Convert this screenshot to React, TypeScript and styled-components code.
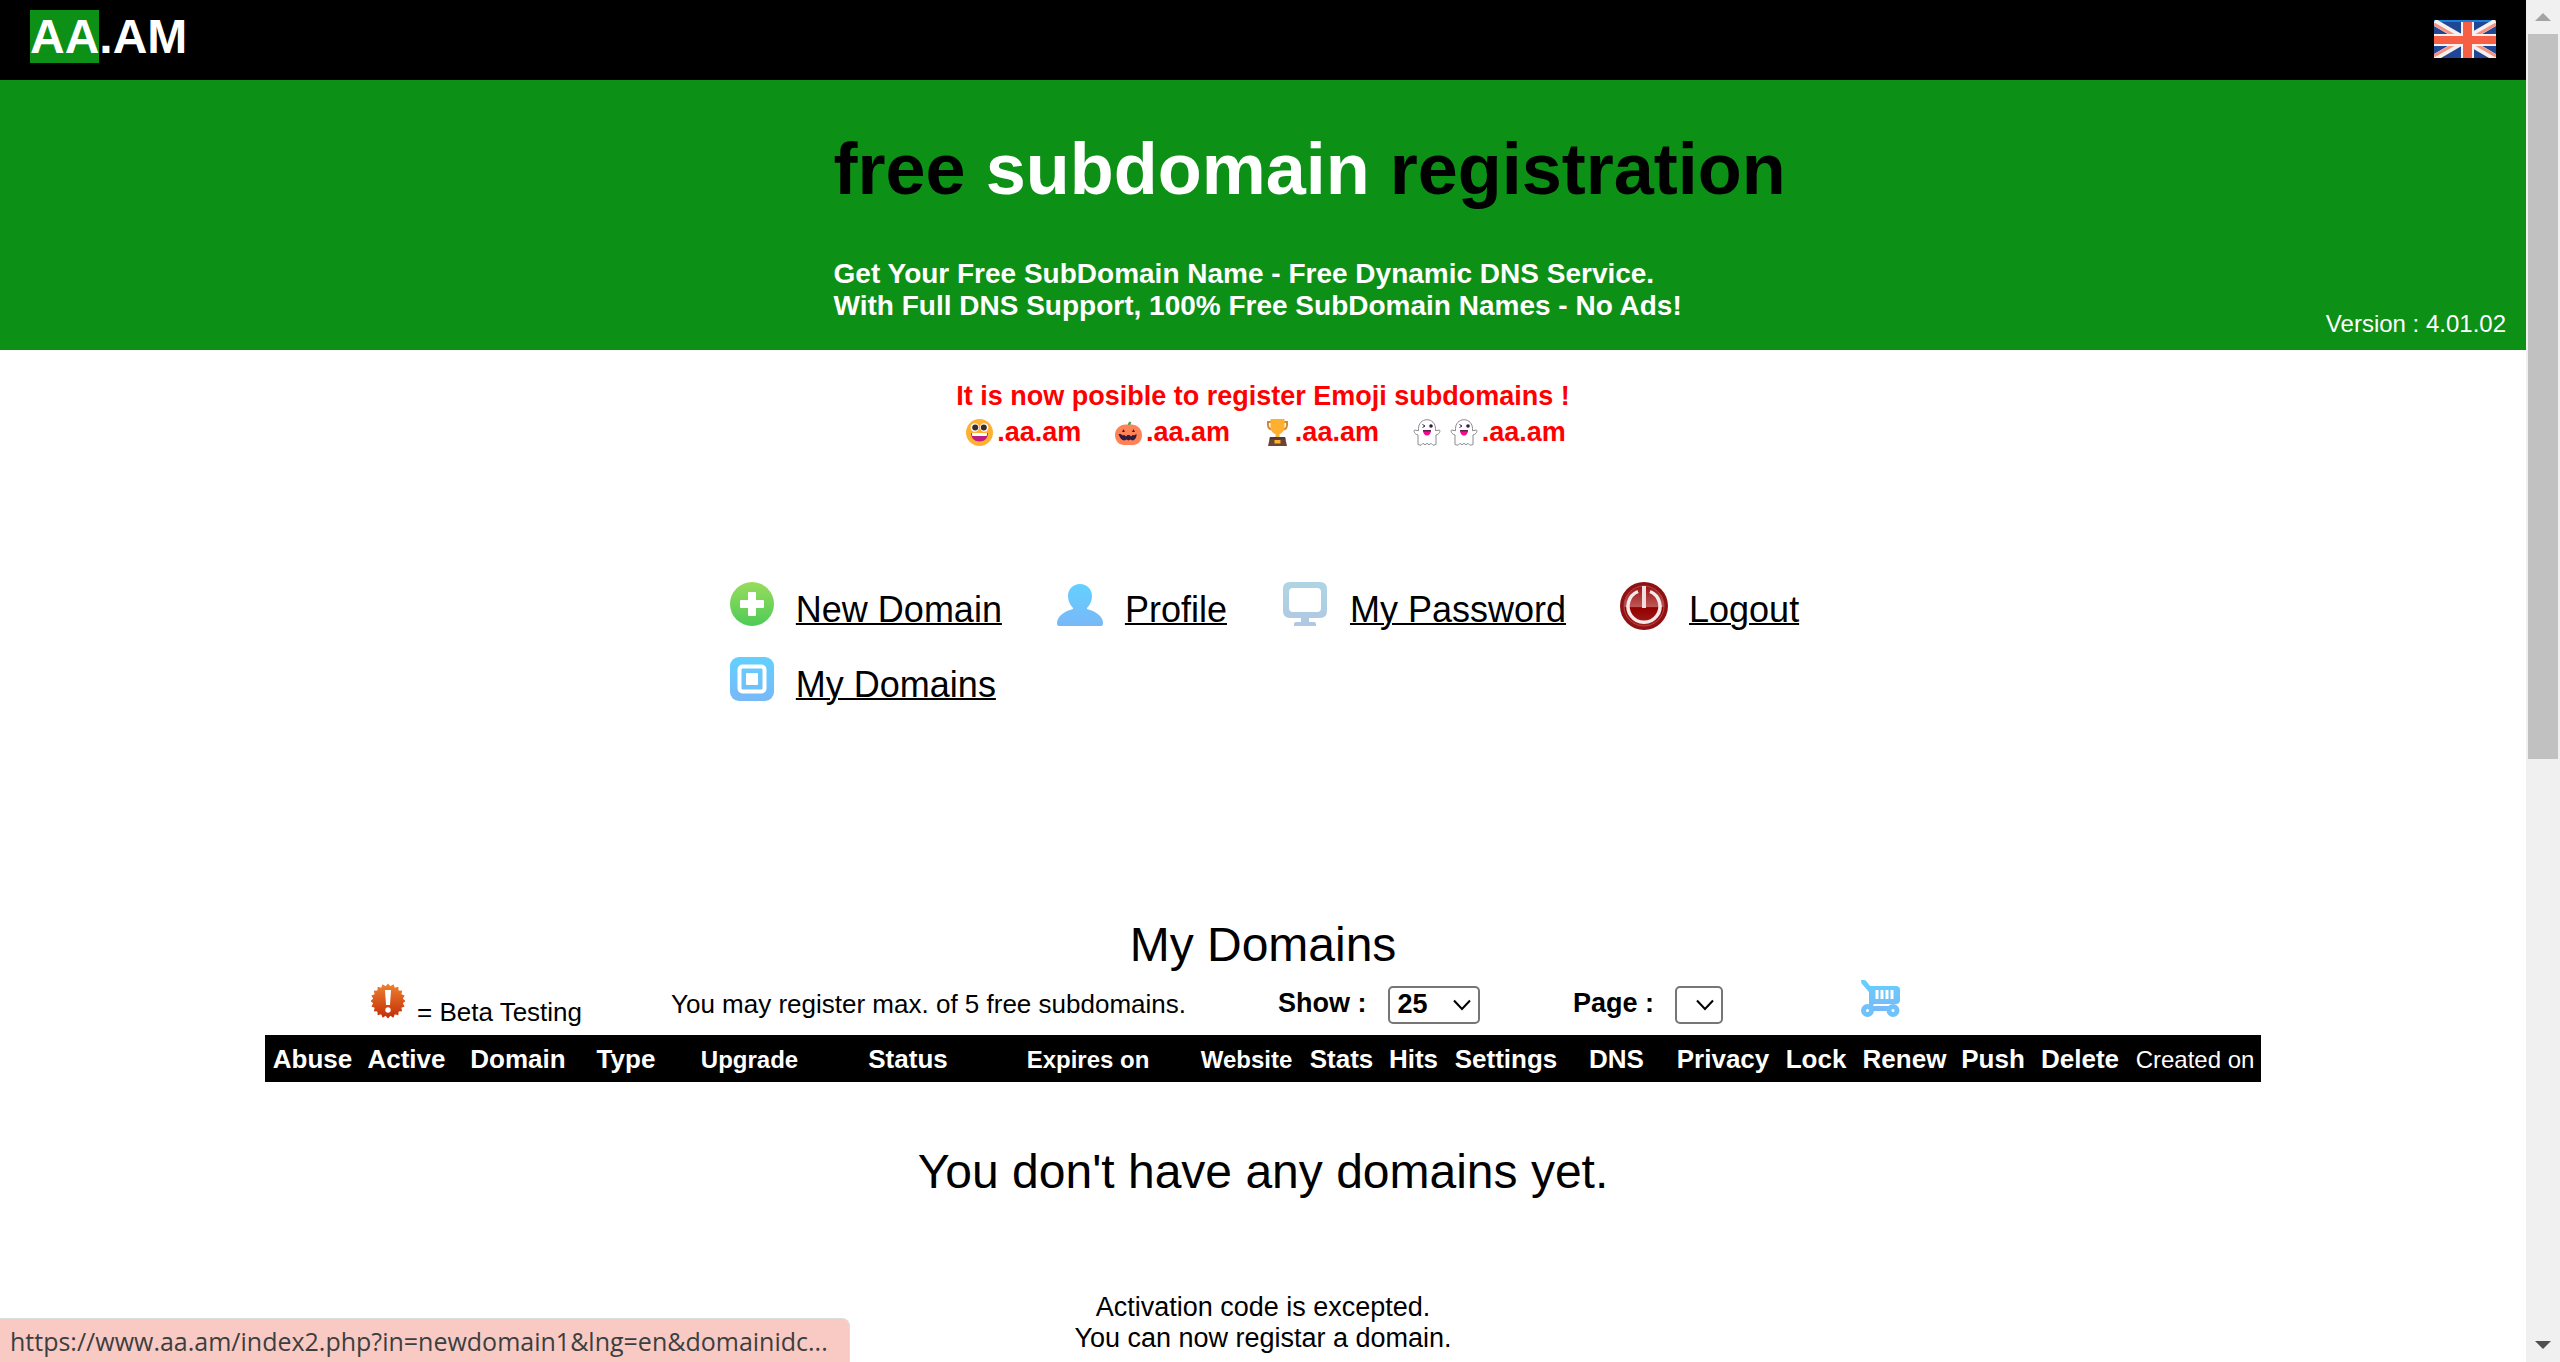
import React from 'react';
import styled, { createGlobalStyle } from 'styled-components';

const GlobalStyle = createGlobalStyle`
  * { box-sizing: border-box; }
  body {
    margin: 0;
    background: #ffffff;
    color: #000000;
    font-family: Arial, "Liberation Sans", sans-serif;
  }
`;

/* ---------- shell ---------- */

const Shell = styled.div`
  display: grid;
  grid-template-columns: minmax(0, 1fr) 34px;
  height: 100vh;
  overflow: hidden;
`;

const Content = styled.div`
  display: flex;
  flex-direction: column;
  overflow: hidden;
`;

const ScrollTrack = styled.div`
  display: grid;
  grid-template-rows: 34px 1fr 34px;
  justify-items: center;
  align-items: center;
  padding: 0 2px;
  background: #f0f0f0;
  overflow: hidden;
`;

const ScrollLane = styled.div`
  width: 100%;
  height: 100%;
`;

const ScrollThumb = styled.div`
  width: 100%;
  height: 56%;
  background: #c1c1c1;
`;

const StatusBubble = styled.div`
  position: fixed;
  left: 0;
  bottom: 0;
  height: 44px;
  width: 850px;
  padding: 0 10px;
  border-top: 1px solid #dddddd;
  border-right: 1px solid #dddddd;
  border-radius: 0 8px 0 0;
  background: #f9cac4;
  color: #3c3f40;
  font-family: "Segoe UI", "Open Sans", sans-serif;
  font-size: 25px;
  line-height: 44px;
  white-space: nowrap;
`;

/* ---------- header ---------- */

const TopBar = styled.header`
  display: flex;
  align-items: center;
  justify-content: space-between;
  height: 80px;
  flex: none;
  padding: 0 30px 4px;
  background: #000000;
`;

const Logo = styled.a`
  padding-bottom: 4px;
  color: #ffffff;
  font-size: 48px;
  font-weight: bold;
  text-decoration: none;
`;

const LogoMark = styled.span`
  background: #0d9016;
`;

const FlagButton = styled.button`
  display: block;
  padding: 2px 0 0;
  border: 0;
  background: none;
  line-height: 0;
`;

const Hero = styled.section`
  display: flex;
  justify-content: space-between;
  flex: none;
  padding: 48px 20px 12px 33%;
  background: #0d9016;
`;

const HeroCopy = styled.div`
  padding-bottom: 16px;
  white-space: nowrap;
`;

const HeroTitle = styled.h1`
  margin: 0 0 48px;
  font-size: 72px;
  line-height: 82px;
`;

const Highlight = styled.span`
  color: #ffffff;
`;

const HeroText = styled.p`
  margin: 0;
  color: #ffffff;
  font-size: 28px;
  font-weight: bold;
  line-height: 32px;
`;

const Version = styled.span`
  align-self: flex-end;
  color: #ffffff;
  font-size: 24px;
  line-height: 28px;
`;

/* ---------- emoji notice ---------- */

const Notice = styled.section`
  align-self: center;
  margin-top: 28px;
  color: #ff0000;
  font-size: 27px;
  font-weight: bold;
  line-height: 36px;
`;

const NoticeText = styled.p`
  margin: 0;
`;

const EmojiList = styled.div`
  display: flex;
  justify-content: space-between;
  padding: 0 4px 0 10px;
`;

const EmojiDomain = styled.span`
  display: flex;
  align-items: center;
  gap: 4px;
`;

const EmojiGroup = styled.span`
  display: flex;
  gap: 9px;
`;

/* ---------- menu ---------- */

const Menu = styled.nav`
  display: flex;
  flex-direction: column;
  gap: 27px;
  align-self: center;
  margin-top: 132px;
`;

const MenuRow = styled.div`
  display: flex;
  gap: 54px;
`;

const MenuLink = styled.a`
  display: flex;
  align-items: flex-end;
  gap: 21px;
  height: 48px;
  color: #000000;
  font-size: 36px;
  line-height: 41px;
  text-decoration-thickness: 2px;
`;

/* ---------- domain list ---------- */

const Title = styled.h2`
  margin: ${(p: { $top: number }) => p.$top}px 0 0;
  font-size: 48px;
  font-weight: normal;
  line-height: 55px;
  text-align: center;
`;

const ListArea = styled.section`
  align-self: center;
`;

const Toolbar = styled.div`
  display: grid;
  grid-template-columns: 300px 607px 295px 288px auto;
  align-items: center;
  height: 48px;
  margin: 8px 0 7px;
  padding-left: 106px;
`;

const Legend = styled.span`
  display: flex;
  align-items: flex-start;
  gap: 12px;
  font-size: 26px;
  line-height: 30px;
`;

const LegendText = styled.span`
  padding-top: 14px;
`;

const Limit = styled.span`
  padding-bottom: 2px;
  font-size: 26px;
  line-height: 30px;
`;

const Field = styled.label`
  display: flex;
  align-items: center;
  gap: 21px;
  font-size: 27px;
  font-weight: bold;
  line-height: 31px;
`;

const FieldName = styled.span`
  padding-bottom: 2px;
`;

const SelectBox = styled.span`
  display: grid;
  align-items: center;
  width: ${(p: { $width: number }) => p.$width}px;

  > * {
    grid-area: 1 / 1;
  }

  > svg {
    justify-self: end;
    margin-right: 9px;
    pointer-events: none;
  }
`;

const Select = styled.select`
  appearance: none;
  width: 100%;
  height: 38px;
  padding: 0 8px;
  border: 2px solid #767676;
  border-radius: 5px;
  background: #ffffff;
  color: #000000;
  font: bold 27px/31px Arial, "Liberation Sans", sans-serif;
`;

const CartButton = styled.button`
  justify-self: start;
  padding: 0 0 12px;
  border: 0;
  background: none;
  line-height: 0;
`;

const DomainTable = styled.table`
  table-layout: fixed;
  width: 1996px;
  border-collapse: collapse;
  background: #000000;
  color: #ffffff;
`;

const Th = styled.th`
  height: 47px;
  padding: 9px 0 0;
  font-size: ${(p: { $small?: boolean; $light?: boolean }) => (p.$small ? 24 : 26)}px;
  font-weight: ${(p: { $small?: boolean; $light?: boolean }) => (p.$light ? 'normal' : 'bold')};
  line-height: 30px;
  vertical-align: baseline;
  white-space: nowrap;
`;

const Message = styled.p`
  margin: 93px 0 0;
  font-size: 27px;
  line-height: 31px;
  text-align: center;
`;

/* ---------- drawings ---------- */

const Flag = () => (
  <svg width="62" height="38" viewBox="0 0 62 38" role="img" aria-label="English">
    <rect width="62" height="38" fill="#1f4795" />
    <rect width="62" height="2" fill="#1680d8" />
    <path d="M0 2 62 38M62 2 0 38" stroke="#f6efee" strokeWidth="7" />
    <path d="M0 4 28 20M34 20 62 36M62 4 34 20M28 20 0 36" stroke="#f5917e" strokeWidth="3" />
    <path d="M27 2h13v36H27zM0 14h62v12H0z" fill="#f8f0ee" />
    <path d="M29 2h9v36h-9zM0 16h62v8H0z" fill="#f65f44" />
  </svg>
);

const Smiley = () => (
  <svg width="27" height="27" viewBox="0 0 27 27">
    <circle cx="13.500" cy="13.500" r="13.500" fill="#ffb02e" />
    <circle cx="8.800" cy="8.500" r="4.200" fill="#fff" />
    <circle cx="18.200" cy="8.500" r="4.200" fill="#fff" />
    <circle cx="9.200" cy="8.500" r="3" fill="#402a32" />
    <circle cx="17.800" cy="8.500" r="3" fill="#402a32" />
    <path d="M5 14h17c0 5-3.500 8.500-8.500 8.500S5 19 5 14z" fill="#bb1d80" />
    <path d="M6 14h15v2q0 1-1 1H7q-1 0-1-1z" fill="#fff" />
  </svg>
);

const Pumpkin = () => (
  <svg width="27" height="27" viewBox="0 0 27 27">
    <path d="M11.500 7c2-1 1-3 3-4.500l2 1c-1 1-1 2-1 4z" fill="#44a54a" />
    <path d="M13.500 6C20 4 27 9 27 16c0 6-4 10-9 10H9c-5 0-9-4-9-10C0 9 7 4 13.500 6z" fill="#ff8257" />
    <path d="M5.500 15c2 1.500 3 1.500 4 1l1.500 1.500 1.500-1.500h2l1.500 1.500 1.500-1.500c1 .5 2 .5 4-1 .5 3-2 6.500-4 6.500l-2-1-2 1-2-1-2 1c-3 0-5-3.500-6-6.500z" fill="#321b41" />
    <path d="M7 13l1.500-3 1.500 3zM17 13l1.500-3 1.500 3z" fill="#321b41" />
  </svg>
);

const Trophy = () => (
  <svg width="27" height="27" viewBox="0 0 27 27">
    <path d="M7 3H4v3c0 3 2 4.500 5 4.500M20 3h3v3c0 3-2 4.500-5 4.500" fill="none" stroke="#d3883e" strokeWidth="2" />
    <path d="M6.500 0h14v8c0 4-2.500 6.500-5 7v4h-4v-4c-2.500-.5-5-3-5-7z" fill="#ffb02e" />
    <path d="M6 18h15l2 9H4z" fill="#6d4534" />
    <path d="M6 18h15l.5 2.500h-16z" fill="#523a34" />
    <path d="M10.500 21h6v3.500h-6z" fill="#ffb02e" />
  </svg>
);

const Ghost = () => (
  <svg width="28" height="27" viewBox="0 0 28 27">
    <path
      d="M14 .7c5 0 8.500 4 8.500 9v2l4-.7c1 1.500 0 4-3.500 5v9.500l-3 .8-2-2-2 1.500-2-1.500-2 1.500-2-1.500-2 2-3-.8V16C1.500 15 .5 12.500 1.500 11l4 .7v-2c0-5 3.500-9 8.500-9z"
      fill="#fff"
      stroke="#8b8b92"
    />
    <path d="M9.500 5.500l2.500 1.500-2.500 1.500" fill="none" stroke="#321b41" />
    <circle cx="18" cy="7" r="1.800" fill="#321b41" />
    <path d="M10 11h8c0 3.500-1.500 5.500-4 5.500S10 14.500 10 11z" fill="#f70a8d" />
    <path d="M10 11h8v1.500h-8z" fill="#62204f" />
  </svg>
);

const AddIcon = () => (
  <svg width="48" height="48" viewBox="0 0 48 48">
    <defs>
      <linearGradient id="addFill" x1="0" y1="0" x2="0" y2="1">
        <stop offset="0" stopColor="#98dc5c" />
        <stop offset="1" stopColor="#4ecb58" />
      </linearGradient>
    </defs>
    <circle cx="25" cy="22" r="22" fill="url(#addFill)" />
    <path d="M21 11q0-1 1-1h6q1 0 1 1v7h7q1 0 1 1v6q0 1-1 1h-7v7q0 1-1 1h-6q-1 0-1-1v-7h-7q-1 0-1-1v-6q0-1 1-1h7z" fill="#fff" />
  </svg>
);

const BlueFill = ({ id }: { id: string }) => (
  <defs>
    <linearGradient id={id} x1="0" y1="0" x2="0" y2="1">
      <stop offset="0" stopColor="#63d0ff" />
      <stop offset="1" stopColor="#79b8f8" />
    </linearGradient>
  </defs>
);

const UserIcon = () => (
  <svg width="48" height="48" viewBox="0 0 48 48">
    <BlueFill id="userFill" />
    <path
      d="M24 2c7 0 12 5 12 12 0 5-2 9-5 12v1c8 2 16 7 16 14v1q0 2-2 2H3q-2 0-2-2v-1c0-7 8-12 16-14v-1c-3-3-5-7-5-12C12 7 17 2 24 2z"
      fill="url(#userFill)"
    />
  </svg>
);

const MonitorIcon = () => (
  <svg width="48" height="48" viewBox="0 0 48 48">
    <defs>
      <linearGradient id="monitorFill" x1="0" y1="0" x2="0" y2="1">
        <stop offset="0" stopColor="#aed5e4" />
        <stop offset="1" stopColor="#b0c8e2" />
      </linearGradient>
    </defs>
    <path
      fillRule="evenodd"
      d="M9 0h30q7 0 7 7v22q0 7-7 7H28v4h5q2 0 2 2v2H13v-2q0-2 2-2h5v-4H9q-7 0-7-7V7q0-7 7-7zM12 6q-4 0-4 4v16q0 4 4 4h24q4 0 4-4V10q0-4-4-4z"
      fill="url(#monitorFill)"
    />
  </svg>
);

const PowerIcon = () => (
  <svg width="48" height="48" viewBox="0 0 48 48">
    <defs>
      <linearGradient id="powerFill" x1="0" y1="0" x2="0" y2="1">
        <stop offset="0" stopColor="#9a1214" />
        <stop offset="0.520" stopColor="#bf5756" />
        <stop offset="0.540" stopColor="#920000" />
        <stop offset="1" stopColor="#a32020" />
      </linearGradient>
    </defs>
    <circle cx="24" cy="24" r="24" fill="#8f1113" />
    <circle cx="24" cy="24" r="20" fill="url(#powerFill)" stroke="#b04848" strokeWidth="1" />
    <path d="M18 9.500a16 16 0 1 0 12 0" fill="none" stroke="#f6e9e9" strokeWidth="3.500" />
    <path d="M24 4v22" stroke="#f1dddd" strokeWidth="4" />
  </svg>
);

const DomainsIcon = () => (
  <svg width="48" height="48" viewBox="0 0 48 48">
    <BlueFill id="domainsFill" />
    <rect x="3" y="0" width="44" height="44" rx="9" fill="url(#domainsFill)" />
    <rect x="12.500" y="9.500" width="25" height="25" rx="3" fill="none" stroke="#fff" strokeWidth="4" />
    <rect x="19" y="16" width="12" height="12" rx="1" fill="#fff" />
  </svg>
);

const BetaIcon = () => {
  const points = Array.from({ length: 40 }, (_, i) => {
    const radius = i % 2 ? 15 : 17.5;
    const angle = (i * Math.PI) / 20;
    return `${17 + radius * Math.sin(angle)},${18 - radius * Math.cos(angle)}`;
  }).join(' ');
  return (
    <svg width="34" height="36" viewBox="0 0 34 36">
      <defs>
        <linearGradient id="betaFill" x1="0" y1="0" x2="0" y2="1">
          <stop offset="0" stopColor="#ee8330" />
          <stop offset="1" stopColor="#c22c08" />
        </linearGradient>
      </defs>
      <polygon points={points} fill="url(#betaFill)" />
      <path d="M14 7h6l-1 15h-4z" fill="#fff" />
      <circle cx="17" cy="27" r="2.700" fill="#fff" />
    </svg>
  );
};

const CartIcon = () => (
  <svg width="39" height="37" viewBox="0 0 39 37">
    <BlueFill id="cartFill" />
    <path d="M0 0h3q2 0 3 2l3 4h26q4 0 4 4v10q0 4-4 4H13l-1 2h20v5H8V12L1 4Q0 3 0 0z" fill="url(#cartFill)" />
    <path d="M16 10v9M21 10v9M26 10v9M31 10v9" stroke="#fff" strokeWidth="3" />
    <circle cx="6.500" cy="30.500" r="4" fill="#fff" stroke="#70c2fd" strokeWidth="5" />
    <circle cx="32" cy="30.500" r="4" fill="#fff" stroke="#70c2fd" strokeWidth="5" />
  </svg>
);

const Chevron = () => (
  <svg width="18" height="12" viewBox="0 0 18 12">
    <path d="M1 1.500l8 8.500 8-8.500" fill="none" stroke="#000" strokeWidth="2" />
  </svg>
);

const ScrollArrow = ({ up }: { up?: boolean }) => (
  <svg width="16" height="8" viewBox="0 0 16 8">
    <path d={up ? 'M0 8 8 0l8 8z' : 'M0 0h16L8 8z'} fill={up ? '#a3a3a3' : '#505050'} />
  </svg>
);

/* ---------- data ---------- */

const emojiDomains = [[Smiley], [Pumpkin], [Trophy], [Ghost, Ghost]];

const menuRows = [
  [
    { label: 'New Domain', Icon: AddIcon },
    { label: 'Profile', Icon: UserIcon },
    { label: 'My Password', Icon: MonitorIcon },
    { label: 'Logout', Icon: PowerIcon },
  ],
  [{ label: 'My Domains', Icon: DomainsIcon }],
];

const columns: { label: string; width: number; small?: boolean; light?: boolean }[] = [
  { label: 'Abuse', width: 95 },
  { label: 'Active', width: 93 },
  { label: 'Domain', width: 130 },
  { label: 'Type', width: 86 },
  { label: 'Upgrade', width: 161, small: true },
  { label: 'Status', width: 156 },
  { label: 'Expires on', width: 204, small: true },
  { label: 'Website', width: 113, small: true },
  { label: 'Stats', width: 77 },
  { label: 'Hits', width: 67 },
  { label: 'Settings', width: 118 },
  { label: 'DNS', width: 103 },
  { label: 'Privacy', width: 110 },
  { label: 'Lock', width: 76 },
  { label: 'Renew', width: 101 },
  { label: 'Push', width: 76 },
  { label: 'Delete', width: 98 },
  { label: 'Created on', width: 132, small: true, light: true },
];

export default function App() {
  return (
    <>
      <GlobalStyle />
      <Shell>
        <Content>
          <TopBar>
            <Logo href="#">
              <LogoMark>AA</LogoMark>.AM
            </Logo>
            <FlagButton type="button">
              <Flag />
            </FlagButton>
          </TopBar>

          <Hero>
            <HeroCopy>
              <HeroTitle>
                free <Highlight>subdomain</Highlight> registration
              </HeroTitle>
              <HeroText>
                Get Your Free SubDomain Name - Free Dynamic DNS Service.
                <br />
                With Full DNS Support, 100% Free SubDomain Names - No Ads!
              </HeroText>
            </HeroCopy>
            <Version>Version : 4.01.02</Version>
          </Hero>

          <Notice>
            <NoticeText>It is now posible to register Emoji subdomains !</NoticeText>
            <EmojiList>
              {emojiDomains.map((icons, i) => (
                <EmojiDomain key={i}>
                  <EmojiGroup>
                    {icons.map((Icon, j) => (
                      <Icon key={j} />
                    ))}
                  </EmojiGroup>
                  .aa.am
                </EmojiDomain>
              ))}
            </EmojiList>
          </Notice>

          <Menu>
            {menuRows.map((row, i) => (
              <MenuRow key={i}>
                {row.map(({ label, Icon }) => (
                  <MenuLink key={label} href="#">
                    <Icon />
                    {label}
                  </MenuLink>
                ))}
              </MenuRow>
            ))}
          </Menu>

          <Title $top={212}>My Domains</Title>
          <ListArea>
            <Toolbar>
              <Legend>
                <BetaIcon />
                <LegendText>= Beta Testing</LegendText>
              </Legend>
              <Limit>You may register max. of 5 free subdomains.</Limit>
              <Field>
                <FieldName>Show :</FieldName>
                <SelectBox $width={92}>
                  <Select defaultValue="25">
                    <option>25</option>
                  </Select>
                  <Chevron />
                </SelectBox>
              </Field>
              <Field>
                <FieldName>Page :</FieldName>
                <SelectBox $width={48}>
                  <Select />
                  <Chevron />
                </SelectBox>
              </Field>
              <CartButton type="button" aria-label="Cart">
                <CartIcon />
              </CartButton>
            </Toolbar>
            <DomainTable>
              <colgroup>
                {columns.map((c) => (
                  <col key={c.label} width={c.width} />
                ))}
              </colgroup>
              <thead>
                <tr>
                  {columns.map((c) => (
                    <Th key={c.label} $small={c.small} $light={c.light}>
                      {c.label}
                    </Th>
                  ))}
                </tr>
              </thead>
            </DomainTable>
          </ListArea>

          <Title $top={62}>You don't have any domains yet.</Title>
          <Message>
            Activation code is excepted.
            <br />
            You can now registar a domain.
          </Message>
        </Content>

        <ScrollTrack>
          <ScrollArrow up />
          <ScrollLane>
            <ScrollThumb />
          </ScrollLane>
          <ScrollArrow />
        </ScrollTrack>
      </Shell>
      <StatusBubble>https://www.aa.am/index2.php?in=newdomain1&amp;lng=en&amp;domainidc...</StatusBubble>
    </>
  );
}
